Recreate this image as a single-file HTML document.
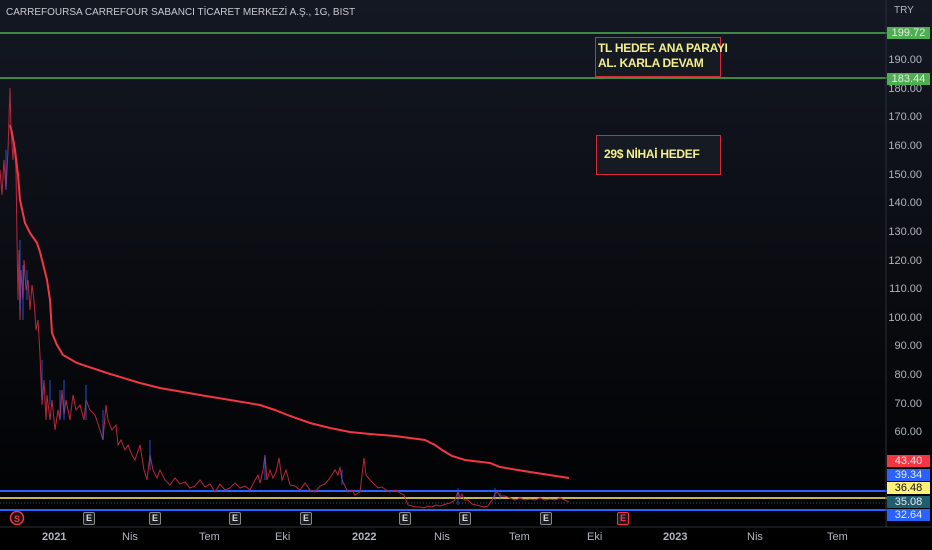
<!DOCTYPE html>
<html><head><meta charset="utf-8"><style>
html,body{margin:0;padding:0}
body{width:932px;height:550px;overflow:hidden;background:linear-gradient(#141823,#000 100%);font-family:"Liberation Sans",sans-serif;position:relative}
.t{position:absolute;color:#b2b5be;font-size:11px}
.yl{position:absolute;right:10px;color:#b2b5be;font-size:11px;text-align:right}
.tag{position:absolute;left:887px;width:43px;height:12px;font-size:11px;line-height:12px;text-align:center;color:#e8e8e8}
.x{position:absolute;top:531px;color:#b2b5be;font-size:11px}
.e{position:absolute;top:512px;width:10px;height:11px;border:1.5px solid #888;border-radius:2px;background:#1a1d25;color:#ddd;font-size:9px;line-height:11px;text-align:center;font-weight:bold}
.box{position:absolute;border:1.5px solid #d8283a;background:#161a22;color:#f3ef8c;font-weight:bold;font-size:12px;line-height:14px;white-space:nowrap;letter-spacing:-0.3px;box-sizing:border-box}
</style></head><body>
<div class="t" style="left:6px;top:7px;font-size:10px;color:#c8cad0">CARREFOURSA CARREFOUR SABANCI TİCARET MERKEZİ A.Ş., 1G, BIST</div>
<div class="t" style="left:894px;top:5px;font-size:10px">TRY</div>
<svg width="932" height="550" style="position:absolute;left:0;top:0">
<line x1="0" y1="33" x2="887" y2="33" stroke="#4caf50" stroke-width="1.5"/>
<line x1="0" y1="78" x2="887" y2="78" stroke="#4caf50" stroke-width="1.5"/>
<line x1="0" y1="491" x2="887" y2="491" stroke="#2962ff" stroke-width="2"/>
<line x1="0" y1="498" x2="887" y2="498" stroke="#fff176" stroke-width="1.5"/>
<line x1="0" y1="503" x2="887" y2="503" stroke="#1e6470" stroke-width="1" stroke-dasharray="1,2"/>
<line x1="0" y1="510" x2="887" y2="510" stroke="#2962ff" stroke-width="2"/>
<line x1="0" y1="527" x2="932" y2="527" stroke="#2a2e39" stroke-width="1"/>
<line x1="886" y1="0" x2="886" y2="527" stroke="#2a2e39" stroke-width="1"/>
<polyline fill="none" stroke="#b8283a" stroke-width="1" points="0,170 2,195 4,160 6,190 8,150 10,88 11,130 13,160 14,140 16,170 17,240 18,300 19,250 20,320 21,270 23,300 24,260 26,290 28,280 30,310 32,285 34,300 36,330 38,320 40,355 41,380 42,405 44,380 46,420 47,395 50,420 52,400 55,430 58,410 60,420 62,390 64,415 66,400 70,420 73,395 76,410 80,405 84,420 86,400 90,410 95,415 100,430 103,440 106,405 108,420 112,430 116,425 118,445 121,440 125,450 128,445 132,455 135,460 140,445 144,470 147,480 150,455 153,470 157,478 160,470 165,480 170,485 175,478 180,484 185,482 190,488 195,486 200,480 205,487 210,484 215,492 220,484 225,490 230,488 235,483 240,488 245,486 250,490 255,480 258,475 260,483 263,470 265,455 267,480 270,470 273,478 276,472 279,458 282,480 286,470 290,485 295,486 300,490 305,483 310,490 315,492 320,486 325,484 330,478 335,470 338,475 340,467 342,480 345,486 348,492 352,490 355,495 360,492 364,458 366,475 370,480 374,484 378,488 382,487 386,490 390,492 396,490 400,493 404,495 408,505 412,506 416,507 420,507 424,508 428,506 432,507 436,505 440,506 446,504 450,503 455,500 458,491 460,498 462,494 464,500 468,500 472,504 476,505 480,506 484,507 488,506 492,500 495,494 497,492 500,496 505,496 510,498 515,500 520,498 525,500 530,499 535,500 540,498 545,500 550,499 555,500 560,498 565,500 569,502"/>
<path d="M6 150V190M20 240V310M23 265V320M27 270V300M42 360V400M50 380V405M64 380V420M60 390V420M86 385V420M103 410V440M150 440V470M265 455V480M342 470V485M458 488V505M495 488V500M500 493V500" stroke="#2962ff" stroke-width="1" opacity="0.8"/>
<polyline fill="none" stroke="#f23645" stroke-width="2" points="10,125 12,133 15,150 18,175 20,200 25,223 30,233 37,243 40,252 44,268 47,280 50,300 52,333 57,345 63,355 77,363 107,373 140,383 160,388 200,395 260,405 275,410 290,416 310,423 330,428 350,432 370,434 395,436 410,438 425,440 435,445 442,450 452,456 465,460 490,463 500,467 530,472 569,478"/>
<circle cx="17" cy="518" r="6.5" fill="#1a1010" stroke="#f23645" stroke-width="1.5"/>
<text x="17" y="522" fill="#f23645" font-size="9" font-weight="bold" text-anchor="middle" font-family="Liberation Sans">S</text>
</svg>
<div class="box" style="left:595px;top:37px;width:126px;height:40px;padding:3px 0 0 2px;line-height:15px">TL HEDEF. ANA PARAYI<br>AL. KARLA DEVAM</div>
<div class="box" style="left:596px;top:135px;width:125px;height:40px;line-height:37px;padding-left:7px">29$ NİHAİ HEDEF</div>
<div class="yl" style="top:54px">190.00</div>
<div class="yl" style="top:83px">180.00</div>
<div class="yl" style="top:111px">170.00</div>
<div class="yl" style="top:140px">160.00</div>
<div class="yl" style="top:169px">150.00</div>
<div class="yl" style="top:197px">140.00</div>
<div class="yl" style="top:226px">130.00</div>
<div class="yl" style="top:255px">120.00</div>
<div class="yl" style="top:283px">110.00</div>
<div class="yl" style="top:312px">100.00</div>
<div class="yl" style="top:340px">90.00</div>
<div class="yl" style="top:369px">80.00</div>
<div class="yl" style="top:398px">70.00</div>
<div class="yl" style="top:426px">60.00</div>
<div class="tag" style="top:27px;background:#4caf50">199.72</div>
<div class="tag" style="top:73px;background:#4caf50">183.44</div>
<div class="tag" style="top:455px;background:#f23645">43.40</div>
<div class="tag" style="top:469px;background:#2962ff">39.34</div>
<div class="tag" style="top:482px;background:#fff176;color:#111">36.48</div>
<div class="tag" style="top:496px;background:#1e5e70">35.08</div>
<div class="tag" style="top:509px;background:#2962ff">32.64</div>
<div class="e" style="left:83px">E</div>
<div class="e" style="left:149px">E</div>
<div class="e" style="left:229px">E</div>
<div class="e" style="left:300px">E</div>
<div class="e" style="left:399px">E</div>
<div class="e" style="left:459px">E</div>
<div class="e" style="left:540px">E</div>
<div class="e" style="left:617px;border-color:#f23645;color:#f23645">E</div>
<div class="x" style="left:42px;font-weight:bold">2021</div>
<div class="x" style="left:122px">Nis</div>
<div class="x" style="left:199px">Tem</div>
<div class="x" style="left:275px">Eki</div>
<div class="x" style="left:352px;font-weight:bold">2022</div>
<div class="x" style="left:434px">Nis</div>
<div class="x" style="left:509px">Tem</div>
<div class="x" style="left:587px">Eki</div>
<div class="x" style="left:663px;font-weight:bold">2023</div>
<div class="x" style="left:747px">Nis</div>
<div class="x" style="left:827px">Tem</div>
</body></html>
